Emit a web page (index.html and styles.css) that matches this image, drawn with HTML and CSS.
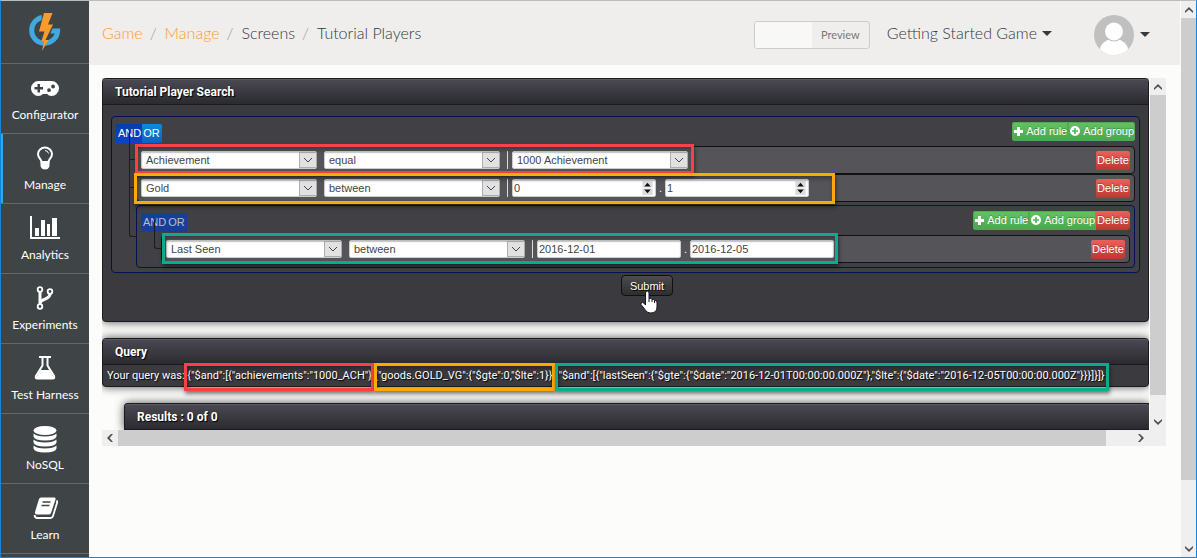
FILE: index.html
```html
<!DOCTYPE html>
<html lang="en">
<head>
<meta charset="utf-8">
<title>Tutorial Players</title>
<link rel="stylesheet" href="styles.css">
</head>
<body>
<svg class="sprite" aria-hidden="true">
  <symbol id="i-chev" viewBox="0 0 10 6"><path d="M1 1l4 4 4-4" fill="none" stroke="currentColor" stroke-width="1"/></symbol>
  <symbol id="i-arrow" viewBox="0 0 8 6"><path d="M0 4L4 0l4 4v2L4 2.600 0 6z" fill="currentColor"/></symbol>
  <symbol id="i-plus" viewBox="0 0 9 9"><path d="M3 0h3v3h3v3H6v3H3V6H0V3h3z" fill="currentColor"/></symbol>
  <symbol id="i-plusc" viewBox="0 0 10 10"><path fill-rule="evenodd" d="M5 0a5 5 0 1 1 0 10A5 5 0 0 1 5 0zM4.200 2v2.200H2v1.600h2.200V8h1.600V5.800H8V4.200H5.800V2z" fill="currentColor"/></symbol>
  <symbol id="i-spin" viewBox="0 0 11 15"><path d="M0 0h11v7H0zM0 8h11v7H0z" fill="#dcdcdc"/><path d="M2 6L5.500 2 9 6zM2 9L5.500 13 9 9z" fill="#111"/></symbol>
</svg>
<div class="window">
  <nav class="sidebar">
    <a class="logo" href="#" aria-label="Home">
      <svg width="34" height="42" viewBox="0 0 34 42"><path d="M14 6.500A13 13 0 1 0 29.600 20H18" fill="none" stroke="#3fa9e0" stroke-width="5"/><path d="M15 1h11l-4.500 11H27L14.500 40l3-17h-7z" fill="#3f4547"/><path d="M16 2h8.500L20 13.500h5L17.500 29h3l-6.500 11 2-10h-2.500l3-9.500H11z" fill="#f89b2b"/></svg>
    </a>
    <a class="nav-item" href="#"><svg width="30" height="24" viewBox="0 0 30 24"><path fill="#fff" fill-rule="evenodd" d="M8.500 5h13a7.500 7.500 0 0 1 0 15c-2 0-3.200-.7-4.300-2h-4.400c-1.100 1.300-2.300 2-4.300 2a7.500 7.500 0 0 1 0-15zM7.500 8v3h-3v2.500h3v3H10v-3h3V11h-3V8zM19 12.200a1.900 1.900 0 1 0 .1 3.800 1.900 1.900 0 0 0-.1-3.800zm4-3.600a1.900 1.900 0 1 0 .1 3.800 1.900 1.900 0 0 0-.1-3.800z"/></svg><span>Configurator</span></a>
    <a class="nav-item active" href="#"><svg width="30" height="24" viewBox="0 0 30 24"><path d="M11.500 16c0-3-3.500-4-3.500-8a7 6.500 0 0 1 14 0c0 4-3.500 5-3.500 8z" fill="none" stroke="#fff" stroke-width="2"/><path d="M10.500 15.500h9V20q-1 3.500-4.500 3.500T10.500 20z" fill="#fff"/><path d="M15 4.500q3 .2 3.500 3" fill="none" stroke="#fff"/></svg><span>Manage</span></a>
    <a class="nav-item" href="#"><svg width="32" height="24" viewBox="0 0 32 24"><path fill="#fff" d="M1 0h2v21h28v2H1zM6 12h4v8H6zm6-8h4v16h-4zm6 4h3v12h-3zm5-6h5v18h-5z"/></svg><span>Analytics</span></a>
    <a class="nav-item" href="#"><svg width="30" height="24" viewBox="0 0 30 24"><g fill="none" stroke="#fff" stroke-width="1.800"><circle cx="10" cy="3.500" r="2.300"/><circle cx="10" cy="20.500" r="2.300"/><circle cx="20" cy="5.500" r="2.300"/></g><path d="M10 6v12M20 8c0 6-9 4-10 9" fill="none" stroke="#fff" stroke-width="3"/></svg><span>Experiments</span></a>
    <a class="nav-item" href="#"><svg width="30" height="24" viewBox="0 0 30 24"><path d="M9 1h12M12.500 1v8.500L6 20q-1 2.500 1.500 2.500h15q2.500 0 1.500-2.500L17.500 9.500V1" fill="none" stroke="#fff" stroke-width="2"/><path d="M10.500 14h9l4.500 8H6z" fill="#fff"/></svg><span>Test Harness</span></a>
    <a class="nav-item" href="#"><svg width="30" height="27" viewBox="0 0 30 27"><g fill="#fff"><ellipse cx="15" cy="4.500" rx="11.500" ry="4.500"/><path d="M3.500 7.500q3 3 11.500 3t11.500-3v3q-1 4-11.500 4t-11.500-4z"/><path d="M3.500 13.500q3 3 11.500 3t11.500-3v3q-1 4-11.500 4t-11.500-4z"/><path d="M3.500 19.500q3 3 11.500 3t11.500-3v3q-1 4-11.500 4t-11.500-4z"/></g></svg><span>NoSQL</span></a>
    <a class="nav-item" href="#"><svg width="30" height="24" viewBox="0 0 30 24"><path d="M11 1.500h13q2 0 1.500 2L21 17q-.5 1.500-2.500 1.500H6.500Q4.500 18 5 16L9 3q.5-1.500 2-1.500z" fill="#fff"/><path d="M12.500 6h8M11.500 9.500h8" stroke="#3f4547" stroke-width="1.500"/><path d="M26.500 4.500q1 .8.500 2.500l-4 13q-.5 2-2.500 2H7q-2 0-2.500-3" fill="none" stroke="#fff" stroke-width="1.800"/></svg><span>Learn</span></a>
  </nav>

  <div class="page">
    <header class="topbar">
      <nav class="crumbs" aria-label="Breadcrumb">
        <a href="#">Game</a><i>/</i><a href="#">Manage</a><i>/</i><span>Screens</span><i>/</i><span>Tutorial Players</span>
      </nav>
      <button class="toggle" type="button"><span class="knob"></span><span class="toggle-text">Preview</span></button>
      <button class="game" type="button">Getting Started Game<span class="caret"></span></button>
      <button class="user" type="button" aria-label="Account"><svg width="40" height="40" viewBox="0 0 40 40"><clipPath id="c"><circle cx="20" cy="20" r="20"/></clipPath><g clip-path="url(#c)"><path fill="#c0c0c0" d="M0 0h40v40H0z"/><ellipse cx="20" cy="35" rx="14" ry="11" fill="#fff"/><circle cx="20" cy="16.500" r="10" fill="#c0c0c0"/><circle cx="20" cy="16.500" r="9" fill="#fff"/></g></svg><span class="caret"></span></button>
    </header>

    <main class="pane">
      <div class="content">
        <section class="panel">
          <h2>Tutorial Player Search</h2>
          <form class="search">
            <div class="group">
              <div class="group-head">
                <div class="cond"><button type="button" class="on">AND</button><button type="button">OR</button></div>
                <div class="btns"><button type="button" class="btn green"><svg width="9" height="9"><use href="#i-plus"/></svg>Add rule</button><button type="button" class="btn green"><svg width="10" height="10"><use href="#i-plusc"/></svg>Add group</button></div>
              </div>
              <div class="rules">
                <div class="rule">
                  <div class="fields red">
                    <span class="select"><select aria-label="Field"><option>Achievement</option></select><svg><use href="#i-chev"/></svg></span>
                    <span class="select"><select aria-label="Operator"><option>equal</option></select><svg><use href="#i-chev"/></svg></span>
                    <span class="value"><span class="select"><select aria-label="Value"><option>1000 Achievement</option></select><svg><use href="#i-chev"/></svg></span></span>
                  </div>
                  <button type="button" class="btn del">Delete</button>
                </div>
                <div class="rule">
                  <div class="fields orange">
                    <span class="select"><select aria-label="Field"><option>Gold</option></select><svg><use href="#i-chev"/></svg></span>
                    <span class="select"><select aria-label="Operator"><option>between</option></select><svg><use href="#i-chev"/></svg></span>
                    <span class="value"><span class="num"><input aria-label="From" value="0"><svg><use href="#i-spin"/></svg></span><b>.</b><span class="num"><input aria-label="To" value="1"><svg><use href="#i-spin"/></svg></span></span>
                  </div>
                  <button type="button" class="btn del">Delete</button>
                </div>
                <div class="group nested">
                  <div class="group-head">
                    <div class="cond dim"><button type="button" class="on">AND</button><button type="button">OR</button></div>
                    <div class="btns"><button type="button" class="btn green"><svg width="9" height="9"><use href="#i-plus"/></svg>Add rule</button><button type="button" class="btn green"><svg width="10" height="10"><use href="#i-plusc"/></svg>Add group</button><button type="button" class="btn del">Delete</button></div>
                  </div>
                  <div class="rules">
                    <div class="rule">
                      <div class="fields teal">
                        <span class="select"><select aria-label="Field"><option>Last Seen</option></select><svg><use href="#i-chev"/></svg></span>
                        <span class="select"><select aria-label="Operator"><option>between</option></select><svg><use href="#i-chev"/></svg></span>
                        <span class="value"><span class="num"><input aria-label="From date" value="2016-12-01"></span><b>.</b><span class="num"><input aria-label="To date" value="2016-12-05"></span></span>
                      </div>
                      <button type="button" class="btn del">Delete</button>
                    </div>
                  </div>
                </div>
              </div>
            </div>
            <div class="actions">
              <div class="submit-wrap"><button type="button" class="submit">Submit</button>
              <svg class="hand" width="18" height="24" viewBox="0 0 18 24"><path d="M5.500 14V3q0-2 1.700-2T9 3v5.500q2.500-.8 3 1 2.200-.5 2.500 1 2.500-.3 2.500 2V17q0 6-6.500 6-4 0-5.500-3.500L1 14.500q-.5-2 1.500-2 1.500 0 3 2.500z" fill="#fff" stroke="#15151f" stroke-width="1"/><path d="M9 8.500V12M12 9.500V12M14.500 11v2" stroke="#15151f"/></svg></div>
            </div>
          </form>
        </section>

        <section class="panel">
          <h2>Query</h2>
          <p class="query">Your query was: <span class="mark red">{"$and":[{"achievements":"1000_ACH"},</span><span class="mark orange">{"goods.GOLD_VG":{"$gte":0,"$lte":1}},</span><span class="mark teal">{"$and":[{"lastSeen":{"$gte":{"$date":"2016-12-01T00:00:00.000Z"},"$lte":{"$date":"2016-12-05T00:00:00.000Z"}}}]}]}</span></p>
        </section>

        <section class="panel results">
          <h2>Results : 0 of 0</h2>
        </section>
      </div>
      <div class="vbar"><svg><use href="#i-arrow"/></svg><span></span><svg class="down"><use href="#i-arrow"/></svg></div>
      <div class="hbar"><svg class="left"><use href="#i-arrow"/></svg><span></span><svg class="right"><use href="#i-arrow"/></svg></div>
    </main>
  </div>

  <div class="vbar outer"><svg><use href="#i-arrow"/></svg><span></span><svg class="down"><use href="#i-arrow"/></svg></div>
</div>
</body>
</html>
```
FILE: styles.css
```css
* { box-sizing: border-box; }
body { margin: 0; font: 11px "Liberation Sans", Arial, sans-serif; background: #fcfcfa; }
button, input, select { font: inherit; margin: 0; }
button { border: 0; padding: 0; background: none; cursor: pointer; }
a { text-decoration: none; }
.sprite { display: none; }

.window {
  display: flex;
  height: 100vh;
  overflow: hidden;
  border: 1px solid #1883d7;
  border-top-color: #bcbcbc;
}

/* sidebar */
.sidebar { flex: none; width: 88px; background: #3f4547; }
.logo, .nav-item { display: flex; border-bottom: 1px solid #63686a; }
.logo { height: 63px; align-items: center; justify-content: center; }
.nav-item {
  height: 70px;
  flex-direction: column;
  align-items: center;
  justify-content: space-between;
  padding: 12px 0 8px;
  color: #fff;
  font: 12px/20px Lato, sans-serif;
}
.nav-item.active { box-shadow: inset 2px 0 #35a8e0; }

/* top bar */
.page { flex: 1; min-width: 0; display: flex; flex-direction: column; }
.topbar {
  display: flex;
  align-items: center;
  height: 64px;
  padding: 3px 30px 0 13px;
  background: #f0eeed;
  color: #33393c;
  font: 300 16px/24px Lato, sans-serif;
}
.crumbs { margin-right: auto; padding-bottom: 3px; white-space: nowrap; }
.crumbs a { color: #f99d31; }
.crumbs i { margin: 0 8px 0 7px; color: #999; font-style: normal; }
.toggle {
  display: flex;
  width: 116px;
  height: 28px;
  margin-right: 17px;
  border: 1px solid #ccc;
  border-radius: 3px;
  overflow: hidden;
  color: #777;
  font: 11px/26px Lato, sans-serif;
}
.knob, .toggle-text { flex: 1; height: 26px; }
.knob { background: #f8f8f7; }
.game, .user { display: flex; align-items: center; color: inherit; }
.game { margin-right: 42px; padding-bottom: 3px; gap: 5px; }
.user { gap: 6px; }
.caret { border: 5px solid transparent; border-top-color: #33393c; border-bottom: 0; }

/* scrolling pane */
.pane {
  display: grid;
  grid-template-columns: minmax(0, 1fr) 17px;
  margin: 13px 14px 0 13px;
}
.content { overflow: hidden; background: #fcfcfa; }
.vbar, .hbar { display: flex; align-items: center; background: #efefef; color: #505050; }
.vbar { flex-direction: column; border-left: 1px solid #fcfcfa; }
.hbar { grid-column: 1 / 3; height: 16px; padding-right: 17px; }
.vbar svg { width: 8px; height: 6px; margin: 6px 0 5px; }
.hbar svg { width: 8px; height: 6px; margin: 0 4px; }
.down { transform: rotate(180deg); }
.left { transform: rotate(-90deg); }
.right { transform: rotate(90deg); }
.vbar span { flex: 1; width: 100%; background: #cdcdcd; margin-bottom: 18px; }
.hbar span { flex: 1; align-self: stretch; margin-right: 27px; background: #cdcdcd; }
.outer { flex: none; width: 16px; }
.outer span { margin-bottom: 60px; }

/* panels */
.panel {
  margin-bottom: 16px;
  border: 1px solid #1a1a20;
  border-radius: 4px;
  background: #3b3a3f;
  box-shadow: 0 0 10px rgba(0, 0, 0, .7);
  color: #fff;
}
.panel h2 {
  margin: 0;
  padding: 0 12px;
  border-top: 1px solid #5b5962;
  border-bottom: 1px solid #1a1a20;
  border-radius: 3px 3px 0 0;
  background: linear-gradient(#4a4852, #2a2b2f);
  font: bold 12px/24px Roboto, sans-serif;
  text-shadow: 1px 1px 1px #000;
}
.search { padding: 11px 8px 0; }
.results { margin: 0 0 0 22px; border-radius: 4px 0 0 0; border-right: 0; border-bottom: 0; }

.group { padding: 4px; border: 1px solid #001450; border-radius: 4px; background: #414045; }
.group-head { display: flex; justify-content: space-between; align-items: center; height: 20px; margin-bottom: 5px; }
.rules { margin-left: 20px; }
.rule {
  position: relative;
  display: flex;
  align-items: center;
  justify-content: space-between;
  height: 28px;
  padding: 0 4px;
  border: 1px solid #111;
  border-radius: 4px;
  background: #555459;
}
.nested { position: relative; margin-top: 3px; }
/* tree connectors */
.rule::before, .nested::before {
  content: "";
  position: absolute;
  left: -8px;
  bottom: 50%;
  width: 7px;
  height: 28px;
  border: solid #1c1c1e;
  border-width: 0 0 1px 1px;
}
.nested::before { height: 50px; border-radius: 0 0 0 3px; }
.nested .rule::before { border-radius: 0 0 0 3px; }

.cond, .btns { display: flex; }
.cond button {
  height: 19px;
  padding: 0 1px 0 2px;
  margin-top: 4px;
  background: linear-gradient(#0a3cae, #0b42cc);
  color: #fff;
}
.cond button + button { background: linear-gradient(#0c8bd8, #0a62c4); padding: 0 2px 0 1px; border-radius: 0 2px 2px 0; }
.cond.dim button, .cond.dim button + button { background: #173f9a; color: #b9bfcf; }
.btn {
  display: flex;
  align-items: center;
  gap: 3px;
  height: 19px;
  padding: 0 1px 0 2px;
  border-radius: 2px;
  color: #fff;
  text-shadow: 0 -1px rgba(0, 0, 0, .25);
}
.green { background: linear-gradient(#62c462, #4da34d); box-shadow: inset 0 0 0 1px #52a952; }
.del { background: linear-gradient(#ee5f5b, #bd362f); padding: 0; width: 34px; justify-content: center; }
.btns .btn { border-radius: 0; }
.btns .btn:first-child { border-radius: 3px 0 0 3px; }
.btns .btn:last-child { border-radius: 0 3px 3px 0; }

.fields { position: relative; display: flex; align-items: center; gap: 7px; height: 18px; }
.value { display: flex; align-items: center; height: 18px; padding-left: 4px; border-left: 1px solid #ddd; }
.value b { width: 9px; text-align: center; font-weight: normal; }
.select, .num { position: relative; display: block; height: 18px; }
.select { width: 176px; }
.num { width: 144px; }
select, input {
  display: block;
  width: 100%;
  height: 18px;
  border: 1px solid #ccc;
  border-radius: 2px;
  background: #fff;
  box-shadow: inset 0 1px 1px rgba(0, 0, 0, .2);
  color: #444;
  outline: 0;
  appearance: none;
}
select { padding: 0 20px 0 4px; }
input { padding: 0 1px; }
.select svg, .num svg { position: absolute; pointer-events: none; }
.select svg { top: 1px; right: 0; width: 18px; height: 16px; padding: 4px 3px; border: 1px solid #adadad; background: #e1e1e1; color: #444; }
.num svg { top: 2px; right: 3px; width: 11px; height: 14px; }

/* callout frames */
.fields::after, .mark::after {
  content: "";
  position: absolute;
  z-index: 1;
  border: 3px solid;
  box-shadow: 1px 3px 4px rgba(0, 0, 0, .45), inset 1px 3px 4px rgba(0, 0, 0, .3);
  pointer-events: none;
}
.red::after { border-color: #f94144; }
.orange::after { border-color: #f9a90a; }
.teal::after { border-color: #0bac8e; }
.fields.red::after { inset: -7px -6px -5px; }
.fields.orange::after { inset: -6px -26px -7px -7px; }
.fields.teal::after { inset: -7px -4px -6px; }
.mark { position: relative; display: inline-block; }
.mark::after { inset: -2px 0 -5px; }
.mark.red::after { left: -3px; }
.mark.teal::after { right: -4px; }

.actions { display: flex; justify-content: center; height: 48px; padding: 2px 0 0 43px; }
.submit {
  display: block;
  width: 52px;
  height: 21px;
  border: 1px solid #111;
  border-radius: 4px;
  background: linear-gradient(#4c4c4c, #2e2e2e);
  color: #fff;
  text-shadow: 1px 1px 1px #000;
}
.submit-wrap { position: relative; }
.hand { position: absolute; left: 19px; top: 15px; }

.query { margin: 0; padding: 0 4px; font: 11px/21px Roboto, sans-serif; white-space: nowrap; text-shadow: 1px 1px 1px #000; }
```
